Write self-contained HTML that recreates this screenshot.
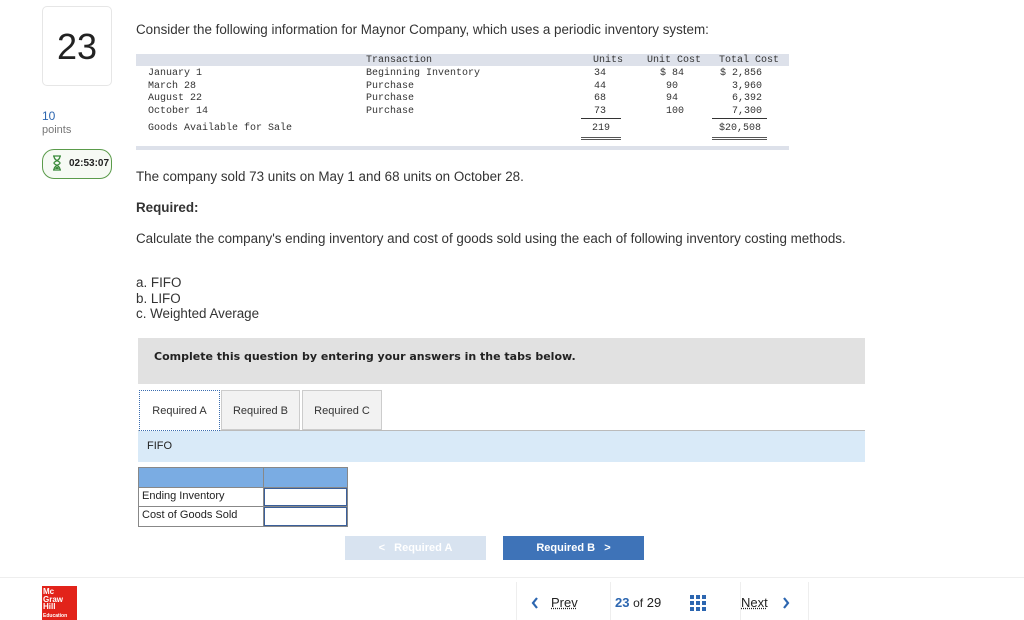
<!DOCTYPE html>
<html><head><style>
*{margin:0;padding:0;box-sizing:border-box}
body{width:1024px;height:620px;background:#fff;font-family:"Liberation Sans",sans-serif;color:#333;position:relative;overflow:hidden}
.a{position:absolute}
.m{font-family:"Liberation Mono",monospace;font-size:10px;color:#333;position:absolute;white-space:pre}
.t{font-size:13.4px;color:#333;position:absolute;white-space:nowrap}
.r{text-align:right}
</style></head><body>
<div class="a" style="left:42px;top:6px;width:70px;height:80px;border:1px solid #e6e6e6;border-radius:5px;font-size:36px;text-align:center;line-height:80px;color:#222">23</div>
<div class="a" style="left:42px;top:109px;font-size:12px;color:#2c66b0">10</div>
<div class="a" style="left:42px;top:124px;font-size:11px;color:#777">points</div>
<div class="a" style="left:42px;top:149px;width:70px;height:30px;border:1px solid #5a9b4a;border-radius:12px;background:#f6faf4;font-size:10px;color:#222;line-height:28px;padding-left:26px;font-weight:bold">02:53:07</div>
<svg class="a" style="left:52px;top:155px" width="10" height="16" viewBox="0 0 10 16"><path d="M1 1h8M1 15h8M2 1c0 5 6 5 6 7s-6 2-6 7M8 1c0 5-6 5-6 7s6 2 6 7" fill="none" stroke="#3a8a3a" stroke-width="1.3"/><path d="M3 14c1-3 3-3 4 0z" fill="#3a8a3a"/></svg>

<div class="t" style="left:136px;top:22px">Consider the following information for Maynor Company, which uses a periodic inventory system:</div>
<div class="a" style="left:136px;top:54px;width:653px;height:12px;background:#dde1ea"></div>
<div class="a" style="left:136px;top:146px;width:653px;height:4px;background:#dde1ea"></div>
<div class="m" style="left:366px;top:55px">Transaction</div>
<div class="m r" style="left:580px;top:55px;width:43px">Units</div>
<div class="m" style="left:647px;top:55px">Unit Cost</div>
<div class="m" style="left:719px;top:55px">Total Cost</div>
<div class="m" style="left:148px;top:68px;line-height:12.6px">January 1
March 28
August 22
October 14</div>
<div class="m" style="left:366px;top:68px;line-height:12.6px">Beginning Inventory
Purchase
Purchase
Purchase</div>
<div class="m" style="left:594px;top:68px;line-height:12.6px">34
44
68
73</div>
<div class="m" style="left:660px;top:68px;line-height:12.6px">$ 84
 90
 94
 100</div>
<div class="m" style="left:720px;top:68px;line-height:12.6px">$ 2,856
  3,960
  6,392
  7,300</div>
<div class="a" style="left:581px;top:118px;width:40px;height:1px;background:#333"></div>
<div class="a" style="left:712px;top:118px;width:55px;height:1px;background:#333"></div>
<div class="m" style="left:148px;top:123px">Goods Available for Sale</div>
<div class="m" style="left:592px;top:123px">219</div>
<div class="m" style="left:719px;top:123px">$20,508</div>
<div class="a" style="left:581px;top:137px;width:40px;height:3px;border-top:1px solid #555;border-bottom:1px solid #555"></div>
<div class="a" style="left:712px;top:137px;width:55px;height:3px;border-top:1px solid #555;border-bottom:1px solid #555"></div>

<div class="t" style="left:136px;top:169px">The company sold 73 units on May 1 and 68 units on October 28.</div>
<div class="t" style="left:136px;top:200px;font-weight:bold">Required:</div>
<div class="t" style="left:136px;top:231px">Calculate the company's ending inventory and cost of goods sold using the each of following inventory costing methods.</div>
<div class="t" style="left:136px;top:275px;line-height:15.5px">a. FIFO<br>b. LIFO<br>c. Weighted Average</div>

<div class="a" style="left:138px;top:338px;width:727px;height:46px;background:#e1e1e1"></div>
<div class="a" style="left:154px;top:350px;font-weight:bold;color:#222;font-family:'DejaVu Sans',sans-serif;font-size:11px">Complete this question by entering your answers in the tabs below.</div>

<div class="a" style="left:138px;top:430px;width:727px;height:1px;background:#bbb"></div>
<div class="a" style="left:139px;top:390px;width:81px;height:41px;border:1px dotted #3a6db0;background:#fff;font-size:11px;line-height:40px;text-align:center">Required A</div>
<div class="a" style="left:221px;top:390px;width:79px;height:40px;border:1px solid #ccc;background:#f2f2f2;font-size:11px;line-height:40px;text-align:center">Required B</div>
<div class="a" style="left:302px;top:390px;width:80px;height:40px;border:1px solid #ccc;background:#f2f2f2;font-size:11px;line-height:40px;text-align:center">Required C</div>
<div class="a" style="left:138px;top:431px;width:727px;height:31px;background:#d9eaf8;font-size:11px;line-height:31px;padding-left:9px;color:#222">FIFO</div>

<div class="a" style="left:138px;top:467px;width:210px;height:60px;border:1px solid #888;background:#fff"></div>
<div class="a" style="left:139px;top:468px;width:208px;height:19px;background:#7aace3"></div>
<div class="a" style="left:263px;top:467px;width:1px;height:60px;background:#888"></div>
<div class="a" style="left:138px;top:487px;width:210px;height:1px;background:#888"></div>
<div class="a" style="left:138px;top:506px;width:210px;height:1px;background:#888"></div>
<div class="a" style="left:142px;top:490px;font-size:11px;color:#222">Ending Inventory</div>
<div class="a" style="left:142px;top:509px;font-size:11px;color:#222">Cost of Goods Sold</div>
<div class="a" style="left:264px;top:488px;width:83px;height:18px;border:1px solid #3a5f9a"></div>
<div class="a" style="left:264px;top:507px;width:83px;height:19px;border:1px solid #3a5f9a"></div>

<div class="a" style="left:345px;top:536px;width:141px;height:24px;background:#d8e3f0;color:#fff;font-size:11px;font-weight:bold;line-height:24px;text-align:center">&lt;&nbsp;&nbsp; Required A</div>
<div class="a" style="left:503px;top:536px;width:141px;height:24px;background:#3e73b8;color:#fff;font-size:11px;font-weight:bold;line-height:24px;text-align:center">Required B &nbsp;&nbsp;&gt;</div>

<div class="a" style="left:0;top:577px;width:1024px;height:1px;background:#eee"></div>
<div class="a" style="left:42px;top:586px;width:35px;height:34px;background:#e2231a;color:#fff;font-size:8px;font-weight:bold;line-height:7.5px;padding:2px 1px">Mc<br>Graw<br>Hill<br><span style="font-size:5px">Education</span></div>
<div class="a" style="left:516px;top:582px;width:1px;height:38px;background:#eee"></div>
<div class="a" style="left:610px;top:582px;width:1px;height:38px;background:#eee"></div>
<div class="a" style="left:740px;top:582px;width:1px;height:38px;background:#eee"></div>
<div class="a" style="left:808px;top:582px;width:1px;height:38px;background:#eee"></div>
<svg class="a" style="left:531px;top:597px" width="8" height="12"><path d="M6 1L2 6l4 5" fill="none" stroke="#2c66b0" stroke-width="2.2"/></svg>
<div class="a" style="left:551px;top:595px;font-size:13px;color:#222;text-decoration:underline dotted">Prev</div>
<div class="a" style="left:615px;top:595px;font-size:13px;color:#222"><b style="color:#2c66b0;font-weight:bold">23</b> <span style="font-size:12px">of</span> 29</div>
<svg class="a" style="left:690px;top:595px" width="16" height="16"><g fill="#2c66b0"><rect x="0" y="0" width="4" height="4"/><rect x="6" y="0" width="4" height="4"/><rect x="12" y="0" width="4" height="4"/><rect x="0" y="6" width="4" height="4"/><rect x="6" y="6" width="4" height="4"/><rect x="12" y="6" width="4" height="4"/><rect x="0" y="12" width="4" height="4"/><rect x="6" y="12" width="4" height="4"/><rect x="12" y="12" width="4" height="4"/></g></svg>
<div class="a" style="left:741px;top:595px;font-size:13px;color:#222;text-decoration:underline dotted">Next</div>
<svg class="a" style="left:782px;top:597px" width="8" height="12"><path d="M2 1l4 5-4 5" fill="none" stroke="#2c66b0" stroke-width="2.2"/></svg>
</body></html>
